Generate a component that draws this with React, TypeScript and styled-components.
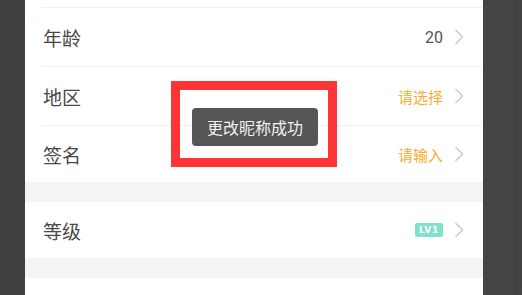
import React from "react";
import styled, { createGlobalStyle } from "styled-components";

const Global = createGlobalStyle`
  html, body { margin: 0; padding: 0; background: #444; }
  body { font-family: "Noto Sans CJK SC", "Noto Sans", sans-serif; }
  #root { height: 295px; overflow: hidden; }
`;

const Screen = styled.div`
  display: flex;
  height: 295px;
  width: 522px;
  overflow: hidden;
`;

const SideLeft = styled.div`
  width: 25px;
  flex: none;
  background: #404040;
`;

const SideRight = styled.div`
  flex: 1;
  background: linear-gradient(90deg, #444 0, #454545 30px, #3f3f3f 32px, #444 39px);
`;

const Panel = styled.div`
  position: relative;
  width: 458px;
  flex: none;
  background: #fff;
  display: flex;
  flex-direction: column;
`;

const Tail = styled.div`
  height: 7px;
  margin-left: 17px;
  border-bottom: 1px solid #f1f1f1;
`;

const Row = styled.div<{ $last?: boolean }>`
  display: flex;
  align-items: center;
  height: ${(p) => (p.$last ? 56 : 58)}px;
  margin-left: 17px;
  padding: 0 19px 0 1px;
  border-bottom: ${(p) => (p.$last ? "none" : "1px solid #f1f1f1")};
`;

const Label = styled.span`
  flex: 1;
  font-size: 19px;
  color: #474747;
`;

const Value = styled.span<{ $hint?: boolean }>`
  font-size: ${(p) => (p.$hint ? 15 : 16)}px;
  color: ${(p) => (p.$hint ? "#f7ac32" : "#555")};
  font-family: ${(p) =>
    p.$hint ? `"Noto Sans CJK SC", sans-serif` : `Roboto, "Noto Sans", sans-serif`};
`;

const Badge = styled.span`
  display: inline-flex;
  align-items: center;
  justify-content: center;
  width: 28px;
  height: 14px;
  border-radius: 2px;
  background: #7fe2cb;
  color: #fff;
  font-family: "DejaVu Sans", sans-serif;
  font-weight: bold;
  font-size: 9px;
  letter-spacing: 0.8px;
`;

const Chevron = styled.svg`
  width: 10px;
  height: 16px;
  margin-left: 11px;
  flex: none;
`;

const Gap = styled.div`
  height: 20px;
  background: #f4f4f4;
`;

const Overlay = styled.div`
  position: absolute;
  left: 146px;
  top: 81px;
  width: 148px;
  height: 68px;
  border: 9px solid #ff3434;
  display: flex;
  align-items: center;
  justify-content: center;
`;

const Toast = styled.div`
  height: 38px;
  padding: 0 15px;
  border-radius: 4px;
  background: #565656;
  color: #f0f0f0;
  font-size: 16px;
  display: flex;
  align-items: center;
  margin: 6px 0 0 2px;
`;

const Arrow = () => (
  <Chevron viewBox="0 0 10 16">
    <path d="M1.5 1 L8.5 8 L1.5 15" fill="none" stroke="#c9c9c9" strokeWidth="1.4" />
  </Chevron>
);

export default function App() {
  return (
    <Screen>
      <Global />
      <SideLeft />
      <Panel>
        <Tail />
        <Row>
          <Label>年龄</Label>
          <Value>20</Value>
          <Arrow />
        </Row>
        <Row>
          <Label>地区</Label>
          <Value $hint>请选择</Value>
          <Arrow />
        </Row>
        <Row $last>
          <Label>签名</Label>
          <Value $hint>请输入</Value>
          <Arrow />
        </Row>
        <Gap />
        <Row $last>
          <Label>等级</Label>
          <Badge>LV1</Badge>
          <Arrow />
        </Row>
        <Gap />
        <Overlay>
          <Toast>更改昵称成功</Toast>
        </Overlay>
      </Panel>
      <SideRight />
    </Screen>
  );
}
